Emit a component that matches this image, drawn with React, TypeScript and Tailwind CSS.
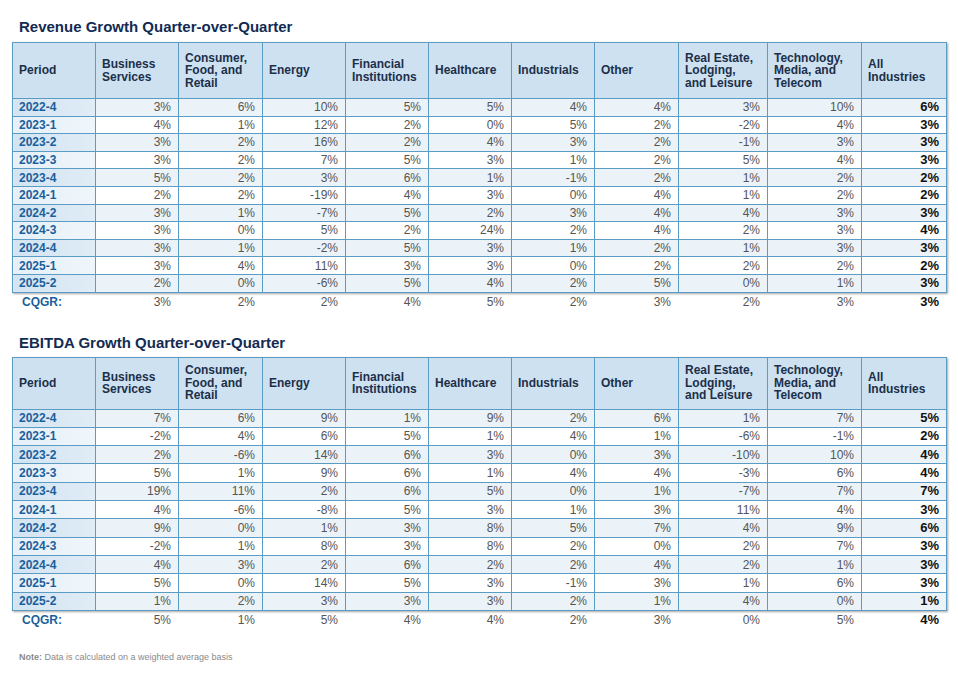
import React from "react";

const headers = [
  "Period",
  "Business\nServices",
  "Consumer,\nFood, and\nRetail",
  "Energy",
  "Financial\nInstitutions",
  "Healthcare",
  "Industrials",
  "Other",
  "Real Estate,\nLodging,\nand Leisure",
  "Technology,\nMedia, and\nTelecom",
  "All\nIndustries",
];

const widthClasses = [
  "w-[83px]",
  "w-[83px]",
  "w-[84px]",
  "w-[83px]",
  "w-[83px]",
  "w-[83px]",
  "w-[83px]",
  "w-[84px]",
  "w-[89px]",
  "w-[94px]",
  "w-[85px]",
];

const periods = [
  "2022-4",
  "2023-1",
  "2023-2",
  "2023-3",
  "2023-4",
  "2024-1",
  "2024-2",
  "2024-3",
  "2024-4",
  "2025-1",
  "2025-2",
];

const revenue: number[][] = [
  [3, 6, 10, 5, 5, 4, 4, 3, 10, 6],
  [4, 1, 12, 2, 0, 5, 2, -2, 4, 3],
  [3, 2, 16, 2, 4, 3, 2, -1, 3, 3],
  [3, 2, 7, 5, 3, 1, 2, 5, 4, 3],
  [5, 2, 3, 6, 1, -1, 2, 1, 2, 2],
  [2, 2, -19, 4, 3, 0, 4, 1, 2, 2],
  [3, 1, -7, 5, 2, 3, 4, 4, 3, 3],
  [3, 0, 5, 2, 24, 2, 4, 2, 3, 4],
  [3, 1, -2, 5, 3, 1, 2, 1, 3, 3],
  [3, 4, 11, 3, 3, 0, 2, 2, 2, 2],
  [2, 0, -6, 5, 4, 2, 5, 0, 1, 3],
];
const revenueCqgr = [3, 2, 2, 4, 5, 2, 3, 2, 3, 3];

const ebitda: number[][] = [
  [7, 6, 9, 1, 9, 2, 6, 1, 7, 5],
  [-2, 4, 6, 5, 1, 4, 1, -6, -1, 2],
  [2, -6, 14, 6, 3, 0, 3, -10, 10, 4],
  [5, 1, 9, 6, 1, 4, 4, -3, 6, 4],
  [19, 11, 2, 6, 5, 0, 1, -7, 7, 7],
  [4, -6, -8, 5, 3, 1, 3, 11, 4, 3],
  [9, 0, 1, 3, 8, 5, 7, 4, 9, 6],
  [-2, 1, 8, 3, 8, 2, 0, 2, 7, 3],
  [4, 3, 2, 6, 2, 2, 4, 2, 1, 3],
  [5, 0, 14, 5, 3, -1, 3, 1, 6, 3],
  [1, 2, 3, 3, 3, 2, 1, 4, 0, 1],
];
const ebitdaCqgr = [5, 1, 5, 4, 4, 2, 3, 0, 5, 4];

function DataTable({
  data,
  cqgr,
  headerClass,
  rowClass,
}: {
  data: number[][];
  cqgr: number[];
  headerClass: string;
  rowClass: string;
}) {
  return (
    <div className="ml-[12px] w-[934px]">
      <table className="w-[934px] border-collapse table-fixed shadow-[1px_1px_2px_rgba(0,0,0,0.35)]">
        <colgroup>
          {widthClasses.map((w, i) => (
            <col key={i} className={w} />
          ))}
        </colgroup>
        <thead>
          <tr className={headerClass}>
            {headers.map((h, i) => (
              <th
                key={i}
                className="border border-[#5b9cc4] bg-[#cde1f0] text-left align-middle px-[6px] font-bold text-[12px] leading-[12.5px] text-[#1c2f4a] whitespace-pre-line"
              >
                {h}
              </th>
            ))}
          </tr>
        </thead>
        <tbody>
          {data.map((row, r) => {
            const odd = r % 2 === 0;
            return (
              <tr key={r} className={rowClass}>
                <td
                  className={`border border-[#5b9cc4] px-[6px] py-0 text-[12px] leading-[14px] font-bold text-[#1b5f9c] ${
                    odd
                      ? "bg-gradient-to-r from-[#d3e4f2] to-[#e0ecf6]"
                      : "bg-gradient-to-r from-[#e6f0f8] to-[#eff5fb]"
                  }`}
                >
                  {periods[r]}
                </td>
                {row.map((v, c) => (
                  <td
                    key={c}
                    className={`border border-[#5b9cc4] px-[7px] py-0 text-right text-[12px] leading-[14px] ${
                      odd ? "bg-[#ebf3f9]" : "bg-white"
                    } ${c === 9 ? "font-bold text-[#111] text-[13px]" : "text-[#555]"}`}
                  >
                    {v}%
                  </td>
                ))}
              </tr>
            );
          })}
        </tbody>
      </table>
      <div className="flex h-[18px] w-[934px]">
        <div className={`${widthClasses[0]} text-[12px] leading-[18px] font-bold text-[#1b5f9c] pl-[10px]`}>
          CQGR:
        </div>
        {cqgr.map((v, c) => (
          <div
            key={c}
            className={`${widthClasses[c + 1]} text-right pr-[7px] text-[12px] leading-[18px] ${
              c === 9 ? "font-bold text-[#111] text-[13px]" : "text-[#555]"
            }`}
          >
            {v}%
          </div>
        ))}
      </div>
    </div>
  );
}

export default function App() {
  return (
    <div className="w-[958px] h-[683px] bg-white overflow-hidden pt-[17px] font-['Liberation_Sans',Arial,sans-serif]">
      <div className="ml-[19px] h-[20px] leading-[20px] text-[15px] font-bold text-[#122b52] mb-[5px]">
        Revenue Growth Quarter-over-Quarter
      </div>
      <DataTable data={revenue} cqgr={revenueCqgr} headerClass="h-[56px]" rowClass="h-[17.6px]" />
      <div className="ml-[19px] mt-[22px] h-[20px] leading-[20px] text-[15px] font-bold text-[#122b52] mb-[4px]">
        EBITDA Growth Quarter-over-Quarter
      </div>
      <DataTable data={ebitda} cqgr={ebitdaCqgr} headerClass="h-[52px]" rowClass="h-[18.3px]" />
      <div className="ml-[19px] mt-[22px] text-[9px] leading-[12px] text-[#8a8a8a]">
        <span className="font-bold">Note:</span> Data is calculated on a weighted average basis
      </div>
    </div>
  );
}
